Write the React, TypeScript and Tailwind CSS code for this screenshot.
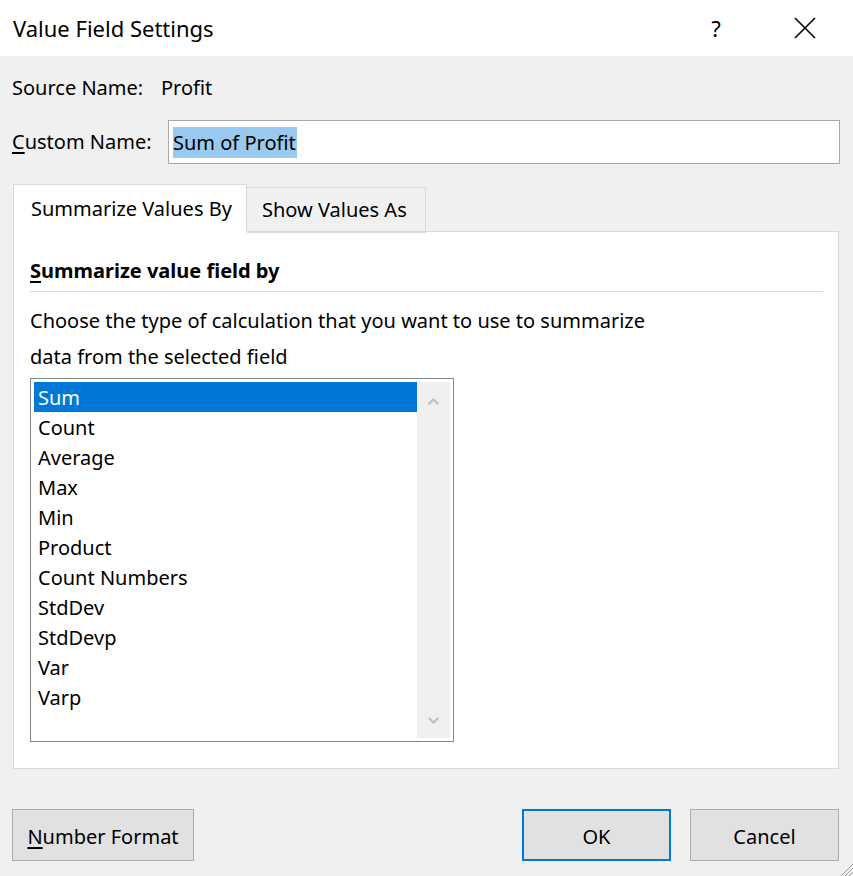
import { ChevronDown, ChevronUp } from "lucide-react";

const items = [
  "Sum",
  "Count",
  "Average",
  "Max",
  "Min",
  "Product",
  "Count Numbers",
  "StdDev",
  "StdDevp",
  "Var",
  "Varp",
];

const App = () => {
  return (
    <div
      className="relative w-[853px] h-[876px] overflow-hidden bg-[#f0f0f0] text-black"
      style={{ fontFamily: '"Noto Sans", "Open Sans", sans-serif' }}
    >
      {/* title bar */}
      <div className="flex items-center h-[56px] bg-white pl-[13px]">
        <h1 className="flex-1 text-[22px] leading-none">Value Field Settings</h1>
        <span className="w-[20px] text-center text-[22px] leading-none mr-[68px]">?</span>
        <svg width="22" height="22" viewBox="0 0 22 22" className="mr-[37px]">
          <path d="M1 1 L21 21 M21 1 L1 21" stroke="#000" strokeWidth="1.6" />
        </svg>
      </div>

      <div className="px-[12px]">
        {/* source name */}
        <div className="flex items-center h-[28px] mt-[18px] text-[20px] leading-none">
          <span className="w-[149px]">Source Name:</span>
          <span>Profit</span>
        </div>

        {/* custom name */}
        <div className="flex items-center mt-[18px] text-[20px]">
          <label className="w-[156px] leading-none">
            <span className="underline underline-offset-[3px] decoration-[2px]">C</span>ustom Name:
          </label>
          <div className="flex items-center flex-1 h-[44px] bg-white border border-[#a8a8a8] pl-[4px] mr-[1px]">
            <span className="bg-[#99c9ef] leading-[31px] pr-[1px]">Sum of Profit</span>
          </div>
        </div>

        {/* tabs */}
        <div className="flex items-end mt-[20px] ml-[1px] h-[48px] text-[20px]">
          <div className="relative z-10 flex items-center h-[48px] w-[234px] bg-white border border-b-0 border-[#d9d9d9] pl-[17px]">
            Summarize Values By
          </div>
          <div className="flex items-center h-[46px] w-[179px] border border-l-0 border-[#d9d9d9] pl-[15px] mb-[-1px]">
            Show Values As
          </div>
        </div>

        {/* panel */}
        <div className="ml-[1px] w-[826px] h-[538px] mt-[-1px] bg-white border border-[#d9d9d9] pl-[16px] pr-[15px]">
          <div className="flex items-center h-[60px] pt-[18px] border-b border-[#dadada] text-[20px] font-bold leading-none">
            <span className="underline underline-offset-[3px] decoration-[2px]">S</span>ummarize value field by
          </div>
          <p className="mt-[11px] text-[20px] leading-[36px]">
            Choose the type of calculation that you want to use to summarize
            <br />
            data from the selected field
          </p>

          {/* list box */}
          <div className="flex mt-[3px] w-[424px] h-[364px] border border-[#828790] p-[3px]">
            <ul className="flex-1 text-[20px]">
              {items.map((item, i) => (
                <li
                  key={item}
                  className={
                    i === 0
                      ? "h-[30px] leading-[32px] pl-[4px] bg-[#0078d7] text-white"
                      : "h-[30px] leading-[32px] pl-[4px]"
                  }
                >
                  {item}
                </li>
              ))}
            </ul>
            <div className="flex flex-col justify-between items-center w-[33px] bg-[#f0f0f0] pt-[11px] pb-[9px]">
              <ChevronUp size={17} strokeWidth={3} color="#c2c2c2" />
              <ChevronDown size={17} strokeWidth={3} color="#c2c2c2" />
            </div>
          </div>
        </div>

        {/* buttons */}
        <div className="flex items-center mt-[40px] text-[20px]">
          <button className="w-[182px] h-[52px] pt-[3px] bg-[#e1e1e1] border border-[#adadad]">
            <span className="underline underline-offset-[3px] decoration-[2px]">N</span>umber Format
          </button>
          <div className="flex-1" />
          <button className="w-[149px] h-[52px] pt-[3px] bg-[#e1e1e1] border-2 border-[#0078d7]">OK</button>
          <button className="w-[149px] h-[52px] pt-[3px] ml-[19px] mr-[2px] bg-[#e1e1e1] border border-[#adadad]">
            Cancel
          </button>
        </div>
      </div>

      {/* resize grip */}
      <svg width="16" height="16" viewBox="0 0 16 16" className="absolute right-0 bottom-0">
        <path d="M16 4 L4 16 M16 8 L8 16 M16 12 L12 16" stroke="#a0a0a0" strokeWidth="1" />
      </svg>
    </div>
  );
};

export default App;
